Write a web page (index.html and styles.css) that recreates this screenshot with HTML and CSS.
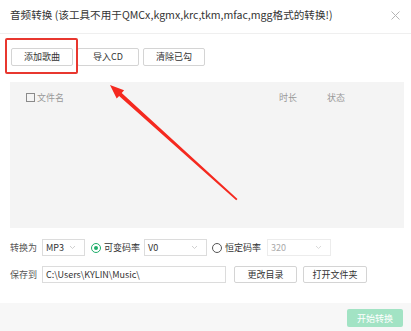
FILE: index.html
```html
<!DOCTYPE html>
<html lang="zh-CN">
<head>
<meta charset="utf-8">
<title>音频转换</title>
<link rel="stylesheet" href="styles.css">
</head>
<body>
<div class="dialog">
  <div class="titlebar">
    <span class="title">音频转换 (该工具不用于QMCx,kgmx,krc,tkm,mfac,mgg格式的转换!)</span>
    <svg class="close" width="9" height="9" viewBox="0 0 9 9"><path d="M0.5 0.5L8.5 8.5M8.5 0.5L0.5 8.5" stroke="#b5b5b5" stroke-width="1" fill="none"/></svg>
  </div>
  <div class="toolbar">
    <button class="btn">添加歌曲</button>
    <button class="btn">导入CD</button>
    <button class="btn">清除已勾</button>
    <div class="highlight"></div>
  </div>
  <div class="list">
    <div class="list-head">
      <span class="check"></span>
      <span class="col-name">文件名</span>
      <span class="col-dur">时长</span>
      <span class="col-state">状态</span>
    </div>
  </div>
  <div class="settings">
    <div class="row">
      <span class="label">转换为</span>
      <div class="select w-fmt"><span>MP3</span><svg class="caret" width="5" height="3" viewBox="0 0 5 3"><path d="M0 0L2.5 2.5L5 0" stroke="#c4c4c4" fill="none" stroke-width="0.8"/></svg></div>
      <span class="radio checked"></span>
      <span class="rtext">可变码率</span>
      <div class="select w-vbr"><span>V0</span><svg class="caret" width="5" height="3" viewBox="0 0 5 3"><path d="M0 0L2.5 2.5L5 0" stroke="#c4c4c4" fill="none" stroke-width="0.8"/></svg></div>
      <span class="radio"></span>
      <span class="rtext">恒定码率</span>
      <div class="select w-cbr disabled"><span>320</span><svg class="caret" width="5" height="3" viewBox="0 0 5 3"><path d="M0 0L2.5 2.5L5 0" stroke="#d0d0d0" fill="none" stroke-width="0.8"/></svg></div>
    </div>
    <div class="row row2">
      <span class="label">保存到</span>
      <div class="input">C:\Users\KYLIN\Music\</div>
      <button class="btn btn-dir">更改目录</button>
      <button class="btn btn-open">打开文件夹</button>
    </div>
  </div>
  <div class="footer">
    <button class="start">开始转换</button>
  </div>
  <svg class="arrow" width="411" height="331" viewBox="0 0 411 331">
    <polygon points="110,85 116.7,98.5 119.1,95.9 236.2,200.3 237.5,199.1 121.7,92.9 124.1,90.3" fill="#f5291f"/>
  </svg>
</div>
</body>
</html>
```

FILE: styles.css
```css
* { box-sizing: border-box; }
html, body { margin: 0; padding: 0; background: #fff; }
body {
  font-family: "Noto Sans CJK SC", "Microsoft YaHei", sans-serif;
  font-size: 9px;
  color: #444;
}
.dialog {
  position: relative;
  width: 411px;
  height: 331px;
  display: flex;
  flex-direction: column;
  overflow: hidden;
}
.titlebar {
  height: 34px;
  padding: 0 10px 0 10px;
  display: flex;
  align-items: center;
  justify-content: space-between;
  border-bottom: 1px solid #efefef;
}
.title {
  font-size: 10.6px;
  color: #333;
  line-height: 1;
  margin-top: -3px;
}
.close { margin-right: 1px; margin-top: -3px; }
.toolbar {
  position: relative;
  display: flex;
  gap: 4px;
  margin-top: 14px;
  padding-left: 11px;
}
.btn {
  font-family: inherit;
  font-size: 9px;
  color: #333;
  background: #fff;
  border: 1px solid #d4d4d4;
  border-radius: 2px;
  height: 18px;
  width: 62px;
  padding: 0;
  line-height: 16px;
}
.highlight {
  position: absolute;
  left: 5px;
  top: -10px;
  width: 73px;
  height: 36px;
  border: 2px solid #e8372f;
  border-radius: 2px;
}
.list {
  margin: 16px 7px 0 10px;
  height: 146px;
  background: #f4f4f4;
}
.list-head {
  height: 31px;
  display: flex;
  align-items: center;
  padding-left: 16px;
  color: #999;
}
.check {
  width: 9px;
  height: 9px;
  border: 1px solid #8a8a8a;
  margin-right: 2px;
}
.col-name { width: 242px; }
.col-dur { width: 48px; }
.settings {
  margin-top: 11px;
  padding-left: 10px;
}
.row {
  display: flex;
  align-items: center;
  height: 17px;
}
.row2 { margin-top: 10px; }
.label { width: 32px; color: #555; }
.select {
  height: 17px;
  border: 1px solid #dcdcdc;
  display: flex;
  align-items: center;
  justify-content: space-between;
  padding: 0 9px 0 3px;
  color: #333;
}
.select.disabled { color: #aaa; border-color: #ececec; }
.w-fmt { width: 43px; }
.w-vbr { width: 63px; margin-left: 4px; }
.w-cbr { width: 64px; margin-left: 6px; }
.radio {
  width: 10px;
  height: 10px;
  border-radius: 50%;
  border: 1px solid #555;
  margin-left: 6px;
  margin-right: 3px;
  position: relative;
}
.radio + .rtext { color: #333; }
.w-vbr + .radio { margin-left: 5px; }
.radio.checked { border-color: #1fae6b; }
.radio.checked::after {
  content: "";
  position: absolute;
  left: 2px;
  top: 2px;
  width: 4px;
  height: 4px;
  border-radius: 50%;
  background: #1fae6b;
}
.input {
  width: 184px;
  height: 17px;
  border: 1px solid #dcdcdc;
  padding: 0 3px;
  line-height: 15px;
  color: #333;
}
.btn-dir { width: 63px; margin-left: 8px; height: 17px; line-height: 15px; }
.btn-open { width: 64px; margin-left: 6px; height: 17px; line-height: 15px; }
.footer {
  margin-top: auto;
  height: 28px;
  background: #f7f7f7;
  display: flex;
  justify-content: flex-end;
  align-items: flex-start;
  padding: 6px 8px 0 0;
}
.start {
  font-family: inherit;
  font-size: 9px;
  width: 56px;
  height: 18px;
  border: none;
  border-radius: 2px;
  background: #a2e3c4;
  color: #fff;
  padding: 0;
}
.arrow {
  position: absolute;
  left: 0;
  top: 0;
  pointer-events: none;
}
```
